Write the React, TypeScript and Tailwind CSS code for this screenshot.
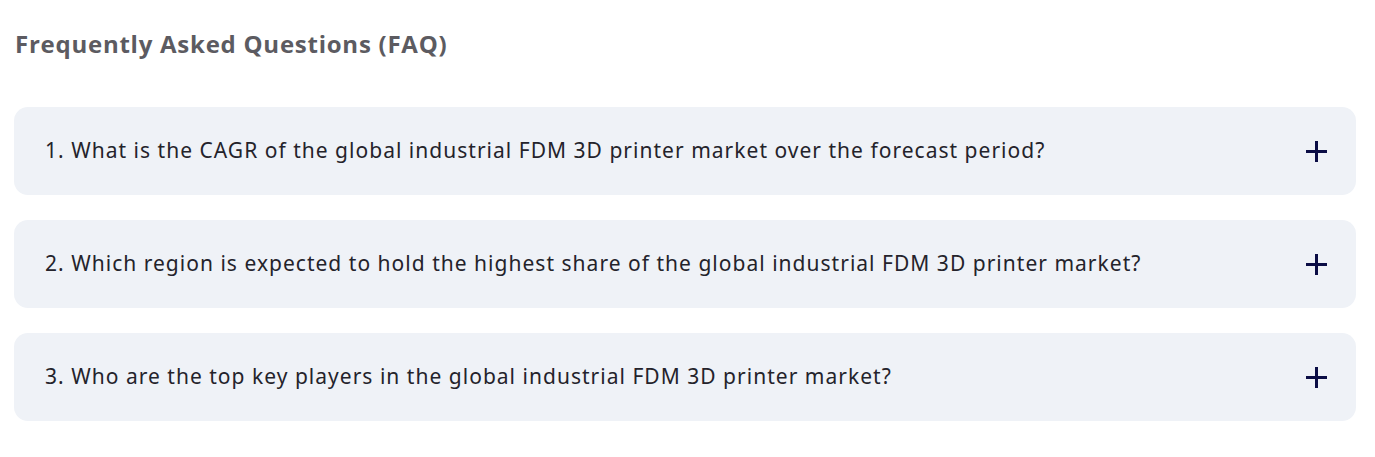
const QUESTIONS = [
  "1. What is the CAGR of the global industrial FDM 3D printer market over the forecast period?",
  "2. Which region is expected to hold the highest share of the global industrial FDM 3D printer market?",
  "3. Who are the top key players in the global industrial FDM 3D printer market?",
];

function PlusIcon() {
  return (
    <svg width="21" height="21" viewBox="0 0 21 21" className="shrink-0">
      <path d="M10.5 0v21M0 10.5h21" stroke="#0b0d45" strokeWidth="3" />
    </svg>
  );
}

export default function App() {
  return (
    <div className="w-[1375px] h-[457px] bg-white px-[14px] pt-[27px]">
      <h2 className="pl-px text-[24px] font-bold leading-[34px] tracking-[0.75px] text-[#5c5b61] font-['Open_Sans',sans-serif]">
        Frequently Asked Questions (FAQ)
      </h2>

      <div className="mt-[46px] flex flex-col gap-[25px] w-[1342px]">
        {QUESTIONS.map((q) => (
          <div
            key={q}
            className="h-[88px] rounded-[14px] bg-[#eff2f7] flex items-center justify-between pl-[31px] pr-[29px]"
          >
            <p className="text-[21px] tracking-[1.02px] text-[#24232b] font-['Noto_Sans',sans-serif]">{q}</p>
            <PlusIcon />
          </div>
        ))}
      </div>
    </div>
  );
}
